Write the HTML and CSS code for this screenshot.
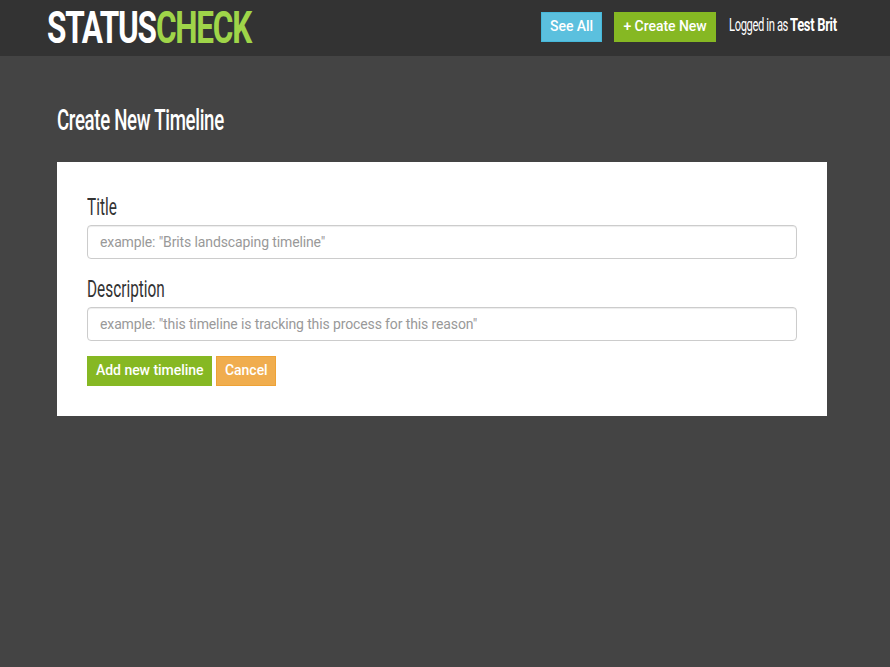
FILE: index.html
```html
<!DOCTYPE html>
<html lang="en">
<head>
<meta charset="utf-8">
<title>StatusCheck</title>
<link rel="stylesheet" href="styles.css">
</head>
<body>
<header class="navbar">
  <a class="brand"><span class="narrow brand-first">STATUS</span><span class="narrow brand-second">CHECK</span></a>
  <nav class="actions">
    <a class="btn btn-info">See All</a>
    <a class="btn btn-create">+ Create New</a>
    <span class="user"><span class="narrow user-label">Logged in as</span><b class="narrow user-name">Test Brit</b></span>
  </nav>
</header>
<main class="container">
  <h1 class="narrow">Create New Timeline</h1>
  <form class="panel">
    <label class="narrow" for="title">Title</label>
    <input class="field" id="title" type="text" placeholder='example: "Brits landscaping timeline"'>
    <label class="narrow" for="description">Description</label>
    <input class="field" id="description" type="text" placeholder='example: "this timeline is tracking this process for this reason"'>
    <div class="buttons">
      <button class="btn btn-add" type="button">Add new timeline</button>
      <button class="btn btn-warning" type="button">Cancel</button>
    </div>
  </form>
</main>
</body>
</html>
```
FILE: styles.css
```css
* { box-sizing: border-box; }
body {
  margin: 0;
  min-height: 667px;
  background: #444;
  font: 14px/20px Roboto, sans-serif;
  color: #333;
}
.narrow {
  display: block;
  white-space: nowrap;
  transform-origin: 0 50%;
}
.navbar {
  display: flex;
  justify-content: space-between;
  height: 56px;
  padding: 0 53px 0 47px;
  background: #333;
}
.brand {
  display: flex;
  height: 55px;
  font-size: 45px;
  line-height: 55px;
  font-weight: 700;
  letter-spacing: -1.8px;
}
.brand-first { width: 109px; color: #fff; transform: scaleX(.7); }
.brand-second { width: 96px; color: #9fd549; transform: scaleX(.7); }
.actions { display: flex; padding-top: 12px; }
.btn {
  height: 30px;
  padding: 3px 8px 5px;
  border: 1px solid;
  font: 500 14px/20px Roboto, sans-serif;
  letter-spacing: -.04px;
  color: #fff;
  text-align: center;
  white-space: nowrap;
}
.btn-info { width: 61px; margin-right: 12px; background: #5bc0de; border-color: #46b8da; }
.btn-create { width: 102px; margin-right: 13px; background: #86b823; border-color: #86b823; }
.user { display: flex; height: 27px; font-size: 17.5px; line-height: 27px; color: #fff; }
.user-label { width: 61px; letter-spacing: -.6px; transform: scaleX(.64); }
.user-name { width: 47px; letter-spacing: -.4px; transform: scaleX(.74); }
.container { width: 770px; margin-left: 57px; padding-top: 44px; }
h1 {
  margin: 0 0 22px;
  font-size: 29px;
  line-height: 40px;
  font-weight: 500;
  letter-spacing: -.5px;
  color: #fff;
  transform: scaleX(.643);
}
.panel { height: 254px; padding: 30px; background: #fff; }
label { width: 300px; height: 33px; font-size: 24px; line-height: 30px; transform: scaleX(.64); }
.field {
  display: block;
  width: 100%;
  height: 34px;
  margin-bottom: 15px;
  padding: 6px 12px;
  border: 1px solid #ccc;
  border-radius: 4px;
  box-shadow: inset 0 1px 1px rgba(0, 0, 0, .075);
  font: 14px/20px Roboto, sans-serif;
  letter-spacing: -.12px;
}
.field::placeholder { color: #999; opacity: 1; }
.buttons { display: flex; gap: 4px; }
.btn-add { width: 125px; background: #86b823; border-color: #86b823; }
.btn-warning { width: 60px; background: #f0ad4e; border-color: #eea236; }
```
